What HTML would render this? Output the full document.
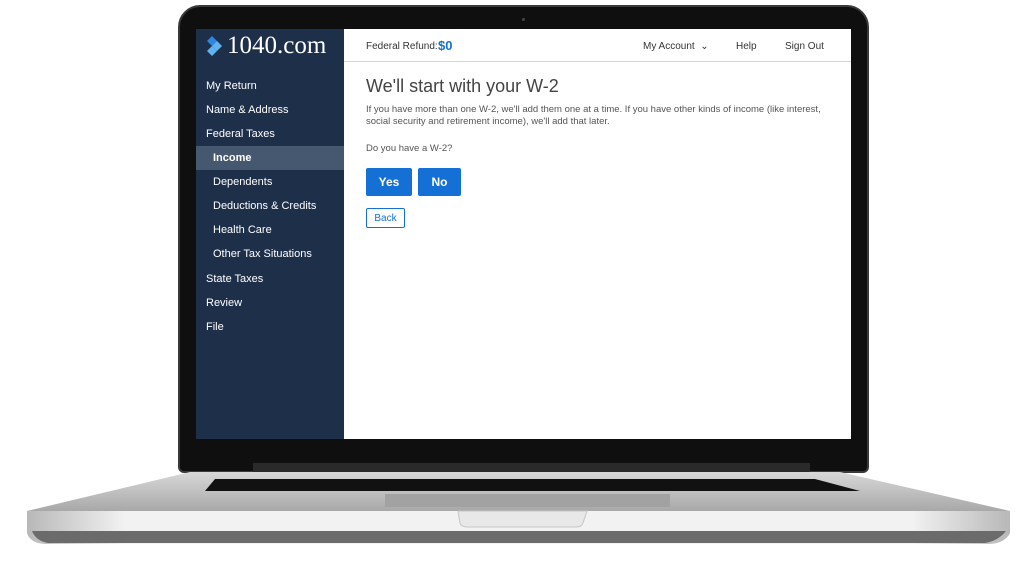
<!DOCTYPE html>
<html><head><style>
*{margin:0;padding:0;box-sizing:border-box}
body{width:1029px;height:569px;background:#fff;position:relative;overflow:hidden;font-family:"Liberation Sans",sans-serif}
.abs{position:absolute}
.lid{left:178px;top:5px;width:691px;height:468px;background:#0f0f0f;border-radius:22px 22px 6px 6px;border:2px solid #3a3a3a}
.screen{left:196px;top:29px;width:655px;height:410px;background:#fff;overflow:hidden}
.side{left:0;top:0;width:148px;height:410px;background:#1e2f4a;color:#fff;font-size:11px}
.side .it{position:absolute;left:10px}
.side .sub{left:17px}
.sel{position:absolute;left:0;top:117px;width:148px;height:24px;background:#46586f}
.hdr{left:148px;top:0;width:507px;height:33px;border-bottom:1px solid #d6d6d6;font-size:10px;color:#333}
.btn{position:absolute;background:#1570d6;color:#fff;font-weight:bold;font-size:12px;text-align:center;line-height:28px;border-radius:2px}
</style></head><body>
<div class="abs lid"></div>
<div class="abs" style="left:522px;top:18px;width:3px;height:3px;border-radius:50%;background:#444"></div>
<div class="abs screen">
  <div class="abs side">
    <div class="abs" style="left:9px;top:7px;width:18px;height:20px">
      <svg width="18" height="20" viewBox="0 0 18 20"><path d="M7 0 L12 5 L7 10 L2 5Z" fill="#2e86de"/><path d="M7 10 L12 5 L17 10 L12 15Z" fill="#5fb4f0"/><path d="M2 15 L7 10 L12 15 L7 20Z" fill="#5fb4f0"/></svg>
    </div>
    <div class="abs" style="left:31px;top:3px;font-family:'Liberation Serif',serif;font-size:25px;color:#fff">1040.com</div>
    <div class="sel"></div>
    <div class="it" style="top:51px">My Return</div>
    <div class="it" style="top:75px">Name &amp; Address</div>
    <div class="it" style="top:99px">Federal Taxes</div>
    <div class="it sub" style="top:123px;font-weight:bold">Income</div>
    <div class="it sub" style="top:147px">Dependents</div>
    <div class="it sub" style="top:171px">Deductions &amp; Credits</div>
    <div class="it sub" style="top:195px">Health Care</div>
    <div class="it sub" style="top:219px">Other Tax Situations</div>
    <div class="it" style="top:244px">State Taxes</div>
    <div class="it" style="top:268px">Review</div>
    <div class="it" style="top:292px">File</div>
  </div>
  <div class="abs hdr">
    <div class="abs" style="left:22px;top:12px">Federal Refund:</div>
    <div class="abs" style="left:94px;top:9px;color:#1570d6;font-weight:bold;font-size:13px">$0</div>
    <div class="abs" style="left:299px;top:12px">My Account &nbsp;⌄</div>
    <div class="abs" style="left:392px;top:12px">Help</div>
    <div class="abs" style="left:441px;top:12px">Sign Out</div>
  </div>
  <div class="abs" style="left:170px;top:47px;font-size:18px;color:#444">We'll start with your W-2</div>
  <div class="abs" style="left:170px;top:75px;width:455px;font-size:9.5px;line-height:12px;color:#555">If you have more than one W-2, we'll add them one at a time. If you have other kinds of income (like interest, social security and retirement income), we'll add that later.</div>
  <div class="abs" style="left:170px;top:114px;font-size:9.5px;color:#555">Do you have a W-2?</div>
  <div class="btn" style="left:170px;top:139px;width:46px">Yes</div>
  <div class="btn" style="left:222px;top:139px;width:43px">No</div>
  <div class="abs" style="left:170px;top:179px;width:39px;height:20px;border:1px solid #1570d6;border-radius:2px;color:#1570d6;font-size:10px;text-align:center;line-height:19px">Back</div>
</div>
<svg class="abs" style="left:0;top:455px" width="1029" height="100">
  <defs>
    <linearGradient id="b" x1="0" y1="0" x2="0" y2="1"><stop offset="0" stop-color="#d8d8d8"/><stop offset="1" stop-color="#a8a8a8"/></linearGradient>
    <linearGradient id="f" x1="0" y1="0" x2="1" y2="0"><stop offset="0" stop-color="#b8b8b8"/><stop offset=".1" stop-color="#f2f2f2"/><stop offset=".9" stop-color="#f2f2f2"/><stop offset="1" stop-color="#b8b8b8"/></linearGradient>
  </defs>
  <rect x="253" y="8" width="557" height="12" fill="#2a2a2a"/>
  <path d="M190 17 L840 17 L1010 56 L27 56Z" fill="url(#b)"/>
  <path d="M215 24 L815 24 L860 36 L205 36Z" fill="#111"/>
  <rect x="385" y="39" width="285" height="13" fill="#a2a2a2"/>
  <path d="M27 56 L1010 56 L1010 78 Q1005 88 990 89 L45 89 Q30 88 27 78Z" fill="url(#f)"/>
  <path d="M32 76 L1006 76 Q998 86 985 88 L48 88 Q36 86 32 76Z" fill="#6b6b6b"/>
  <path d="M458 56 L587 56 L583 68 Q582 72 576 72 L468 72 Q461 72 460 68Z" fill="#e8e8e8" stroke="#c6c6c6"/>
</svg>
</body></html>
